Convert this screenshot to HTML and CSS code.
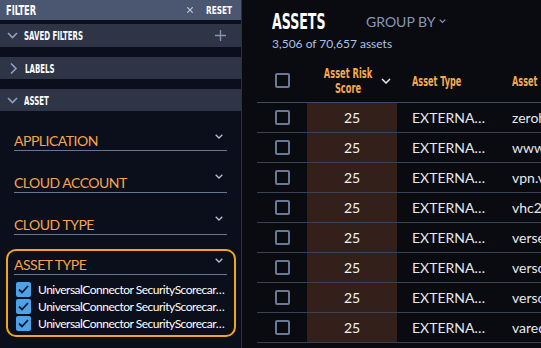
FILE: index.html
```html
<!DOCTYPE html>
<html>
<head>
<meta charset="utf-8">
<link rel="stylesheet" href="styles.css">
</head>
<body>
<div class="app">
  <aside class="filter">
    <div class="filter-head">
      <span class="title"><span class="cond s-filter">FILTER</span></span>
      <svg class="close" width="6" height="6" viewBox="0 0 6 6"><path d="M0.3 0.3l5.4 5.4M5.7 0.3L0.3 5.7" stroke="#c3cad8" stroke-width="1.1"/></svg>
      <span class="reset"><span class="cond s-reset">RESET</span></span>
    </div>
    <div class="sec sec-saved">
      <svg class="chev" width="11" height="7" viewBox="0 0 11 7"><path d="M1 1l4.5 4.5L10 1" fill="none" stroke="#8fa0c0" stroke-width="1.6"/></svg>
      <span class="sec-title"><span class="cond s-sec">SAVED FILTERS</span></span>
      <svg class="plus" width="11" height="11" viewBox="0 0 11 11"><path d="M5.5 0v11M0 5.5h11" stroke="#8a96aa" stroke-width="1.3"/></svg>
    </div>
    <div class="sec sec-labels">
      <svg class="chev" width="11" height="11" viewBox="0 0 11 11"><path d="M3 0.5l5 5-5 5" fill="none" stroke="#8fa0c0" stroke-width="1.6"/></svg>
      <span class="sec-title"><span class="cond s-sec">LABELS</span></span>
    </div>
    <div class="sec sec-asset">
      <svg class="chev" width="11" height="7" viewBox="0 0 11 7"><path d="M1 1l4.5 4.5L10 1" fill="none" stroke="#8fa0c0" stroke-width="1.6"/></svg>
      <span class="sec-title"><span class="cond s-sec">ASSET</span></span>
    </div>
    <div class="fields">
      <div class="field">
        <span class="field-label">APPLICATION</span>
        <svg class="fchev" width="8" height="5" viewBox="0 0 8 5"><path d="M0.7 0.7L4 4l3.3-3.3" fill="none" stroke="#b3bfd3" stroke-width="1.3"/></svg>
      </div>
      <div class="field">
        <span class="field-label">CLOUD ACCOUNT</span>
        <svg class="fchev" width="8" height="5" viewBox="0 0 8 5"><path d="M0.7 0.7L4 4l3.3-3.3" fill="none" stroke="#b3bfd3" stroke-width="1.3"/></svg>
      </div>
      <div class="field">
        <span class="field-label">CLOUD TYPE</span>
        <svg class="fchev" width="8" height="5" viewBox="0 0 8 5"><path d="M0.7 0.7L4 4l3.3-3.3" fill="none" stroke="#b3bfd3" stroke-width="1.3"/></svg>
      </div>
      <div class="box">
        <div class="field field-in">
          <span class="field-label">ASSET TYPE</span>
          <svg class="fchev" width="8" height="5" viewBox="0 0 8 5"><path d="M0.7 0.7L4 4l3.3-3.3" fill="none" stroke="#b3bfd3" stroke-width="1.3"/></svg>
        </div>
        <ul class="checks">
          <li><span class="cb-on"><svg width="11" height="9" viewBox="0 0 11 9"><path d="M1 4.5l3 3L10 1" fill="none" stroke="#0b1322" stroke-width="1.8"/></svg></span><span class="opt">UniversalConnector SecurityScorecard Asset</span></li>
          <li><span class="cb-on"><svg width="11" height="9" viewBox="0 0 11 9"><path d="M1 4.5l3 3L10 1" fill="none" stroke="#0b1322" stroke-width="1.8"/></svg></span><span class="opt">UniversalConnector SecurityScorecard Domain</span></li>
          <li><span class="cb-on"><svg width="11" height="9" viewBox="0 0 11 9"><path d="M1 4.5l3 3L10 1" fill="none" stroke="#0b1322" stroke-width="1.8"/></svg></span><span class="opt">UniversalConnector SecurityScorecard IP</span></li>
        </ul>
      </div>
    </div>
  </aside>
  <main class="main">
    <div class="top">
      <span class="assets-title"><span class="cond s-assets">ASSETS</span></span>
      <span class="groupby">GROUP BY <svg width="7" height="5" viewBox="0 0 7 5"><path d="M0.7 0.7L3.5 3.5l2.8-2.8" fill="none" stroke="#8898b8" stroke-width="1.2"/></svg></span>
    </div>
    <div class="count">3,506 of 70,657 assets</div>
    <div class="table">
      <div class="thead">
        <div class="c-check"><span class="cb"></span></div>
        <div class="c-risk h-risk">
          <span class="hr-text cond"><span>Asset Risk</span><span>Score</span></span>
          <svg width="10" height="6" viewBox="0 0 10 6"><path d="M1 1l4 4 4-4" fill="none" stroke="#e8ecf2" stroke-width="1.5"/></svg>
        </div>
        <div class="c-type hcell"><span class="cond s-head">Asset Type</span></div>
        <div class="c-name hcell"><span class="cond s-head">Asset</span></div>
      </div>
      <div class="row"><div class="c-check"><span class="cb"></span></div><div class="c-risk">25</div><div class="c-type"><span class="ell">EXTERNAL_DOMAIN</span></div><div class="c-name">zerohour</div></div>
      <div class="row"><div class="c-check"><span class="cb"></span></div><div class="c-risk">25</div><div class="c-type"><span class="ell">EXTERNAL_DOMAIN</span></div><div class="c-name">www.site</div></div>
      <div class="row"><div class="c-check"><span class="cb"></span></div><div class="c-risk">25</div><div class="c-type"><span class="ell">EXTERNAL_DOMAIN</span></div><div class="c-name">vpn.vsite</div></div>
      <div class="row"><div class="c-check"><span class="cb"></span></div><div class="c-risk">25</div><div class="c-type"><span class="ell">EXTERNAL_DOMAIN</span></div><div class="c-name">vhc2019</div></div>
      <div class="row"><div class="c-check"><span class="cb"></span></div><div class="c-risk">25</div><div class="c-type"><span class="ell">EXTERNAL_DOMAIN</span></div><div class="c-name">verse.com</div></div>
      <div class="row"><div class="c-check"><span class="cb"></span></div><div class="c-risk">25</div><div class="c-type"><span class="ell">EXTERNAL_DOMAIN</span></div><div class="c-name">versoc.com</div></div>
      <div class="row"><div class="c-check"><span class="cb"></span></div><div class="c-risk">25</div><div class="c-type"><span class="ell">EXTERNAL_DOMAIN</span></div><div class="c-name">versoc2</div></div>
      <div class="row"><div class="c-check"><span class="cb"></span></div><div class="c-risk">25</div><div class="c-type"><span class="ell">EXTERNAL_DOMAIN</span></div><div class="c-name">varedo</div></div>
    </div>
  </main>
</div>
</body>
</html>
```
FILE: styles.css
```css
* { box-sizing: border-box; }
html, body { margin: 0; padding: 0; }
body {
  width: 541px;
  height: 348px;
  overflow: hidden;
  background: #0a0b10;
  font-family: Lato, "Noto Sans", sans-serif;
  color: #e6e9ef;
}
.app { display: flex; height: 348px; }
.cond {
  font-family: "DejaVu Sans", sans-serif;
  font-weight: 700;
  font-stretch: semi-condensed;
  display: inline-block;
  white-space: nowrap;
  transform-origin: left center;
}
.s-filter { font-size: 13.5px; transform: scaleX(0.68); }
.s-reset { font-size: 10.5px; transform: scaleX(0.78); }
.s-sec { font-size: 13px; transform: scaleX(0.6); }
.s-assets { font-size: 21.5px; transform: scaleX(0.65); }
.s-head { font-size: 13.5px; transform: scaleX(0.67); }
.filter {
  width: 242px;
  flex: none;
  background: #0b0f1c;
  border-right: 1px solid #2a3142;
  display: flex;
  flex-direction: column;
}
.filter-head {
  height: 20px;
  background: #4b5670;
  display: flex;
  align-items: center;
  padding: 0 9px 0 6px;
  color: #fff;
  margin-bottom: 4px;
}
.filter-head .title { flex: 1; display: flex; }
.filter-head .close { flex: none; margin-right: 13px; }
.filter-head .reset { width: 26px; flex: none; display: flex; }
.sec {
  height: 23px;
  background: #2d3547;
  display: flex;
  align-items: center;
  padding: 0 15px 0 7px;
  color: #fff;
  margin-bottom: 10px;
}
.sec-labels { height: 22px; }
.sec-labels .chev { margin-left: 1px; margin-right: 5px; }
.sec-asset { height: 22px; margin-bottom: 0; }
.sec .chev { flex: none; margin-right: 6px; }
.sec-title { flex: 1; display: flex; }
.field {
  margin: 0 14px;
  height: 42px;
  display: flex;
  align-items: flex-end;
  justify-content: space-between;
  border-bottom: 1px solid #6b7590;
}
.fields > .field:first-child { height: 40px; }
.field-label {
  font-size: 14px;
  color: #f5a54a;
  letter-spacing: -0.5px;
  line-height: 16px;
  padding-bottom: 1px;
}
.fchev { align-self: flex-start; margin-top: 23px; margin-right: 4px; }
.box {
  margin: 14px 5px 0 6px;
  border: 2px solid #f3a51c;
  border-radius: 10px;
  padding: 0 7px 3px 6px;
}
.field-in { margin: 0; height: 24px; }
.field-in .fchev { margin-top: 7px; }
.checks { list-style: none; margin: 6px 0 0 2px; padding: 0; }
.checks li { display: flex; align-items: center; height: 17px; }
.cb-on {
  width: 15px; height: 15px; flex: none;
  background: #4da3ea;
  border-radius: 2px;
  display: flex; align-items: center; justify-content: center;
  margin-right: 7px;
}
.opt {
  font-size: 12px;
  letter-spacing: -0.5px;
  color: #fff;
  white-space: nowrap;
  overflow: hidden;
  text-overflow: ellipsis;
  width: 192px;
}
.main { flex: 1; min-width: 0; overflow: hidden; }
.top {
  display: flex;
  align-items: center;
  padding: 8px 0 0 30px;
  height: 34px;
}
.assets-title { width: 94px; color: #fff; display: flex; }
.groupby { font-size: 14px; color: #8898b8; display: flex; align-items: center; gap: 4px; }
.count { padding-left: 30px; font-size: 12px; color: #a9c1e8; margin-top: 2px; }
.table { margin: 8px 0 0 15px; width: 400px; }
.thead {
  display: flex;
  height: 44px;
  border-bottom: 1px solid #3d4a63;
}
.thead > div { display: flex; align-items: center; }
.c-check { width: 50px; flex: none; display: flex; align-items: center; justify-content: center; }
.cb {
  width: 15px; height: 15px;
  border: 2px solid #6b7a94;
  border-radius: 2px;
  display: block;
}
.c-risk { width: 90px; flex: none; }
.h-risk { justify-content: center; gap: 8px; padding-left: 10px; }
.hr-text {
  width: 50px;
  display: flex;
  flex-direction: column;
  align-items: center;
  font-size: 13.5px;
  line-height: 15px;
  color: #f7a94d;
  transform: scaleX(0.68);
  transform-origin: center;
}
.hcell { color: #f7a94d; }
.c-type { width: 100px; flex: none; padding-left: 15px; }
.c-name { flex: none; padding-left: 15px; white-space: nowrap; }
.row {
  display: flex;
  height: 30px;
  border-bottom: 1px solid #3a4356;
}
.row > div { display: flex; align-items: center; }
.row .c-risk { background: #33201a; justify-content: center; font-size: 14px; color: #eef0f4; }
.row .c-type, .row .c-name { font-size: 14px; color: #e4e7ee; }
.ell { display: block; width: 77px; white-space: nowrap; overflow: hidden; text-overflow: ellipsis; }
```
